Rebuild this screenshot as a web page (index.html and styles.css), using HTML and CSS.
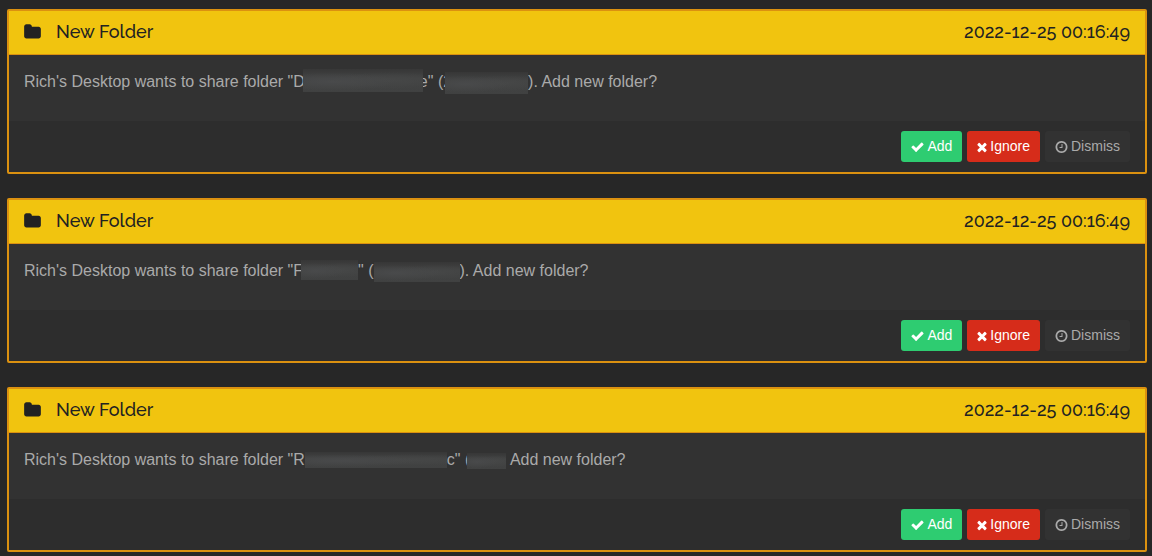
FILE: index.html
```
<!DOCTYPE html>
<html lang="en">
<head>
<meta charset="utf-8">
<title>New Folder</title>
<link rel="stylesheet" href="styles.css">
</head>
<body>
<svg class="sprite" aria-hidden="true">
  <symbol id="folder" viewBox="0 0 1664 1792"><path d="M1664 608v704q0 92-66 158t-158 66H224q-92 0-158-66T0 1312V352q0-92 66-158t158-66h320q92 0 158 66t66 158v32h672q92 0 158 66t66 158z"/></symbol>
  <symbol id="check" viewBox="121 0 1550 1792"><path d="M1671 566q0 40-28 68l-724 724-136 136q-28 28-68 28t-68-28l-136-136-362-362q-28-28-28-68t28-68l136-136q28-28 68-28t68 28l294 295 656-657q28-28 68-28t68 28l136 136q28 28 28 68z"/></symbol>
  <symbol id="times" viewBox="298 0 1192 1792"><path d="M1490 1322q0 40-28 68l-136 136q-28 28-68 28t-68-28l-294-294-294 294q-28 28-68 28t-68-28l-136-136q-28-28-28-68t28-68l294-294-294-294q-28-28-28-68t28-68l136-136q28-28 68-28t68 28l294 294 294-294q28-28 68-28t68 28l136 136q28 28 28 68t-28 68l-294 294 294 294q28 28 28 68z"/></symbol>
  <symbol id="clock" viewBox="128 0 1536 1792"><path d="M1024 544v448q0 14-9 23t-23 9H672q-14 0-23-9t-9-23v-64q0-14 9-23t23-9h224V544q0-14 9-23t23-9h64q14 0 23 9t9 23zm416 352q0-148-73-273t-198-198-273-73-273 73-198 198-73 273 73 273 198 198 273 73 273-73 198-198 73-273zm224 0q0 209-103 385.500T1281.500 1561 896 1664t-385.500-103T231 1281.500 128 896t103-385.500T510.500 231 896 128t385.500 103T1561 510.500 1664 896z"/></symbol>
</svg>
<main class="notifications">
  <section class="panel">
    <header class="panel-heading">
      <svg class="folder-icon" aria-hidden="true"><use href="#folder"/></svg>
      <h3 class="panel-title">New Folder</h3>
      <time class="panel-time">2022-12-25 00:16:49</time>
    </header>
    <p class="panel-body">Rich's Desktop wants to share folder "D<span class="redacted redacted-name-a"></span>e" (2<span class="redacted redacted-id-a"></span>). Add new folder?</p>
    <footer class="panel-footer">
      <button class="btn btn-success" type="button"><svg class="icon icon-check" aria-hidden="true"><use href="#check"/></svg>Add</button>
      <button class="btn btn-danger" type="button"><svg class="icon icon-times" aria-hidden="true"><use href="#times"/></svg>Ignore</button>
      <button class="btn btn-default" type="button"><svg class="icon icon-clock" aria-hidden="true"><use href="#clock"/></svg>Dismiss</button>
    </footer>
  </section>
  <section class="panel">
    <header class="panel-heading">
      <svg class="folder-icon" aria-hidden="true"><use href="#folder"/></svg>
      <h3 class="panel-title">New Folder</h3>
      <time class="panel-time">2022-12-25 00:16:49</time>
    </header>
    <p class="panel-body">Rich's Desktop wants to share folder "F<span class="redacted redacted-name-b"></span>" (<span class="redacted redacted-id-b"></span>). Add new folder?</p>
    <footer class="panel-footer">
      <button class="btn btn-success" type="button"><svg class="icon icon-check" aria-hidden="true"><use href="#check"/></svg>Add</button>
      <button class="btn btn-danger" type="button"><svg class="icon icon-times" aria-hidden="true"><use href="#times"/></svg>Ignore</button>
      <button class="btn btn-default" type="button"><svg class="icon icon-clock" aria-hidden="true"><use href="#clock"/></svg>Dismiss</button>
    </footer>
  </section>
  <section class="panel">
    <header class="panel-heading">
      <svg class="folder-icon" aria-hidden="true"><use href="#folder"/></svg>
      <h3 class="panel-title">New Folder</h3>
      <time class="panel-time">2022-12-25 00:16:49</time>
    </header>
    <p class="panel-body">Rich's Desktop wants to share folder "R<span class="redacted redacted-name-c"></span>c" (<span class="redacted redacted-id-c"></span> Add new folder?</p>
    <footer class="panel-footer">
      <button class="btn btn-success" type="button"><svg class="icon icon-check" aria-hidden="true"><use href="#check"/></svg>Add</button>
      <button class="btn btn-danger" type="button"><svg class="icon icon-times" aria-hidden="true"><use href="#times"/></svg>Ignore</button>
      <button class="btn btn-default" type="button"><svg class="icon icon-clock" aria-hidden="true"><use href="#clock"/></svg>Dismiss</button>
    </footer>
  </section>
</main>
</body>
</html>
```
FILE: styles.css
```
* { box-sizing: border-box; }
body {
  margin: 0;
  background: #272727;
  color: #aaa;
  font-family: "Liberation Sans", Arial, sans-serif;
  font-size: 16px;
  line-height: 23px;
}
.sprite { display: none; }
.notifications {
  display: flex;
  flex-direction: column;
  gap: 24px;
  padding: 9px 5px 5px 7px;
}
.panel {
  border: 2px solid #db9110;
  border-radius: 2px;
  background: #323232;
}
.panel-heading {
  display: flex;
  align-items: center;
  padding: 10px 15px 12px;
  border-bottom: 1px solid #db9110;
  background: #f1c40f;
  color: #222;
  font-family: Raleway, Lato, sans-serif;
  font-size: 18px;
  line-height: 21px;
}
.folder-icon {
  width: 17px;
  height: 18px;
  margin-right: 15px;
  fill: currentColor;
}
.panel-title {
  margin: 0;
  font-size: 18px;
  font-weight: 500;
}
.panel-time { margin-left: auto; font-weight: 500; }
.panel-body { margin: 0; padding: 15px 15px 28px; }
.panel-footer {
  display: flex;
  justify-content: flex-end;
  gap: 5px;
  padding: 10px 15px;
  background: #2d2d2d;
}
.btn {
  display: flex;
  align-items: center;
  gap: 3px;
  padding: 5px 10px;
  border: 0;
  border-radius: 3px;
  color: #fff;
  font-family: inherit;
  font-size: 14px;
  line-height: 21px;
}
.btn-success { background: #2ecc71; }
.btn-danger { background: #d62c1a; }
.btn-default { background: #323232; color: #aaa; }
.icon { height: 14px; fill: currentColor; }
.icon-check { width: 13px; }
.icon-times { width: 10px; }
.icon-clock { width: 13px; }
.redacted {
  display: inline-block;
  height: 20px;
  margin-top: -4px;
  margin-bottom: -4px;
  vertical-align: middle;
  position: relative;
  background:
    radial-gradient(ellipse at 25% 55%, #494a4b, transparent 50%),
    radial-gradient(ellipse at 72% 50%, #464747, transparent 50%),
    linear-gradient(#373737, #424343 40%, #404141);
}
.redacted-name-a { width: 120px; height: 23px; margin: -6px -4px -2px -2px; }
.redacted-id-a { width: 83px; height: 22px; margin-left: -7px; }
.redacted-name-b { width: 57px; margin: -6px 0 -2px -2px; }
.redacted-id-b { width: 86px; }
.redacted-name-c { width: 142px; height: 16px; margin-bottom: -2px; }
.redacted-id-c { width: 39px; height: 16px; margin-left: -3px; }
```
